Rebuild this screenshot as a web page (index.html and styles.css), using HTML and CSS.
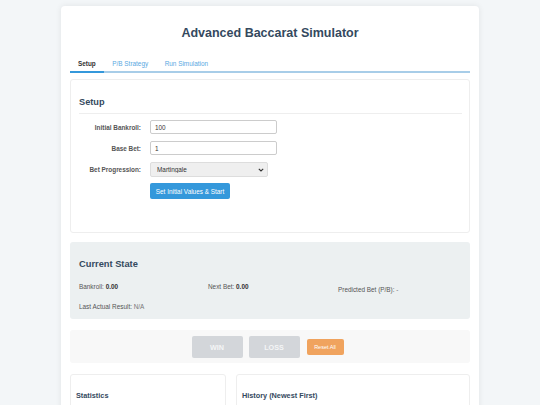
FILE: index.html
```html
<!DOCTYPE html>
<html>
<head>
<meta charset="UTF-8">
<title>Advanced Baccarat Simulator</title>
<link rel="stylesheet" href="styles.css">
</head>
<body>
<div class="container">
	<h1>Advanced Baccarat Simulator</h1>

	<div class="tabs">
		<button class="tab active">Setup</button>
		<button class="tab">P/B Strategy</button>
		<button class="tab">Run Simulation</button>
	</div>

	<div class="card setup">
		<h2>Setup</h2>
		<div class="form">
			<label for="bankroll">Initial Bankroll:</label>
			<input id="bankroll" class="field" type="text" value="100">
			<label for="basebet">Base Bet:</label>
			<input id="basebet" class="field" type="text" value="1">
			<label for="progression">Bet Progression:</label>
			<div class="select-wrap">
				<select id="progression" class="select">
					<option>Martingale</option>
					<option>Fibonacci</option>
					<option>D'Alembert</option>
				</select>
				<svg class="chevron" width="6" height="4" viewBox="0 0 6 4"><path d="M0.8 0.8 L3 3 L5.2 0.8" fill="none" stroke="#333" stroke-width="1.1"/></svg>
			</div>
			<span></span>
			<button class="btn-start">Set Initial Values &amp; Start</button>
		</div>
	</div>

	<div class="state">
		<h3>Current State</h3>
		<div class="state-grid">
			<div class="stat">Bankroll: <b>0.00</b></div>
			<div class="stat">Next Bet: <b>0.00</b></div>
			<div class="stat predicted">Predicted Bet (P/B): <span>-</span></div>
			<div class="stat">Last Actual Result: <span>N/A</span></div>
		</div>
	</div>

	<div class="actions">
		<button class="btn-big" disabled>WIN</button>
		<button class="btn-big" disabled>LOSS</button>
		<button class="btn-reset">Reset All</button>
	</div>

	<div class="bottom">
		<div class="card panel"><h4>Statistics</h4></div>
		<div class="card panel"><h4>History (Newest First)</h4></div>
	</div>
</div>
</body>
</html>
```

FILE: styles.css
```css
body{
	margin:0;
	padding:6px 0 0;
	background:#f3f6f8;
	font-family:"Liberation Sans", Arial, sans-serif;
	color:#333;
}
.container{
	width:400px;
	margin:0 auto;
	padding:20px 9px 20px;
	background:#fff;
	border-radius:4px;
	box-shadow:0 0 6px rgba(0,0,0,0.08);
}
h1{
	margin:0 0 15px;
	font-size:12.5px;
	line-height:15px;
	text-align:center;
	color:#34495e;
}
.tabs{
	display:flex;
	border-bottom:2px solid #a8cde8;
}
.tab{
	margin:0 0 -2px;
	padding:4px 8.5px 3px 8px;
	border:none;
	border-bottom:2px solid transparent;
	background:none;
	font-family:inherit;
	font-size:6.4px;
	line-height:8px;
	color:#5aa8df;
}
.tab.active{
	font-weight:bold;
	color:#333;
	border-bottom-color:#3498db;
}
.card{
	border:1px solid #eee;
	border-radius:3px;
	background:#fff;
}
.setup{
	margin-top:6px;
	padding:17px 7px 33px 8px;
}
h2{
	margin:0 0 6px;
	padding-bottom:5px;
	border-bottom:1px solid #eee;
	font-size:9.2px;
	line-height:11px;
	color:#34495e;
}
.form{
	display:grid;
	grid-template-columns:62px auto;
	column-gap:9px;
	row-gap:7px;
	align-items:center;
	justify-items:start;
}
.form label{
	justify-self:end;
	font-size:6.4px;
	font-weight:bold;
	color:#555;
}
.field{
	box-sizing:border-box;
	width:127px;
	height:14px;
	margin:0;
	padding:0 4px;
	border:1px solid #ccc;
	border-radius:2px;
	font-family:inherit;
	font-size:6.4px;
	color:#333;
}
.select-wrap{
	position:relative;
	width:118px;
}
.select{
	-webkit-appearance:none;
	appearance:none;
	display:block;
	box-sizing:border-box;
	width:118px;
	height:15px;
	margin:0;
	padding:0 6px;
	border:1px solid #ddd;
	border-radius:2px;
	background:#efefef;
	font-family:inherit;
	font-size:6.4px;
	color:#333;
}
.chevron{
	position:absolute;
	right:4px;
	top:5.5px;
	pointer-events:none;
}
.btn-start{
	display:block;
	margin:-1px 0 0;
	width:80px;
	height:16px;
	padding:0;
	border:none;
	border-radius:2px;
	background:#3498db;
	color:#fff;
	font-family:inherit;
	font-size:6.4px;
}
.state{
	margin-top:9px;
	padding:17px 9px 8px;
	background:#ecf0f1;
	border-radius:3px;
}
h3{
	margin:0 0 13px;
	font-size:9.3px;
	line-height:11px;
	color:#34495e;
}
.state-grid{
	display:grid;
	grid-template-columns:129px 130px 1fr;
	row-gap:9px;
}
.stat{
	font-size:6.4px;
	line-height:8px;
	color:#555;
}
.stat b{
	color:#333;
}
.stat span{
	color:#777;
}
.predicted{
	margin-top:3px;
}
.actions{
	display:flex;
	justify-content:center;
	align-items:center;
	gap:6px;
	margin-top:11px;
	padding:6px 5px 5px 0;
	background:#f8f8f8;
	border-radius:3px;
}
.btn-big{
	width:51px;
	height:22px;
	padding:0;
	border:none;
	border-radius:2px;
	background:#d3d6da;
	color:#f4f5f6;
	font-family:inherit;
	font-size:7.2px;
	font-weight:bold;
}
.btn-reset{
	margin-left:1px;
	width:37px;
	height:16px;
	padding:0;
	border:none;
	border-radius:2px;
	background:#f0a35e;
	color:#fff;
	font-family:inherit;
	font-size:5.5px;
}
.bottom{
	display:grid;
	grid-template-columns:2fr 3fr;
	gap:10px;
	margin-top:11px;
}
.panel{
	padding:16px 5px 30px;
}
h4{
	margin:0;
	font-size:7.3px;
	line-height:9px;
	color:#34495e;
}
```
